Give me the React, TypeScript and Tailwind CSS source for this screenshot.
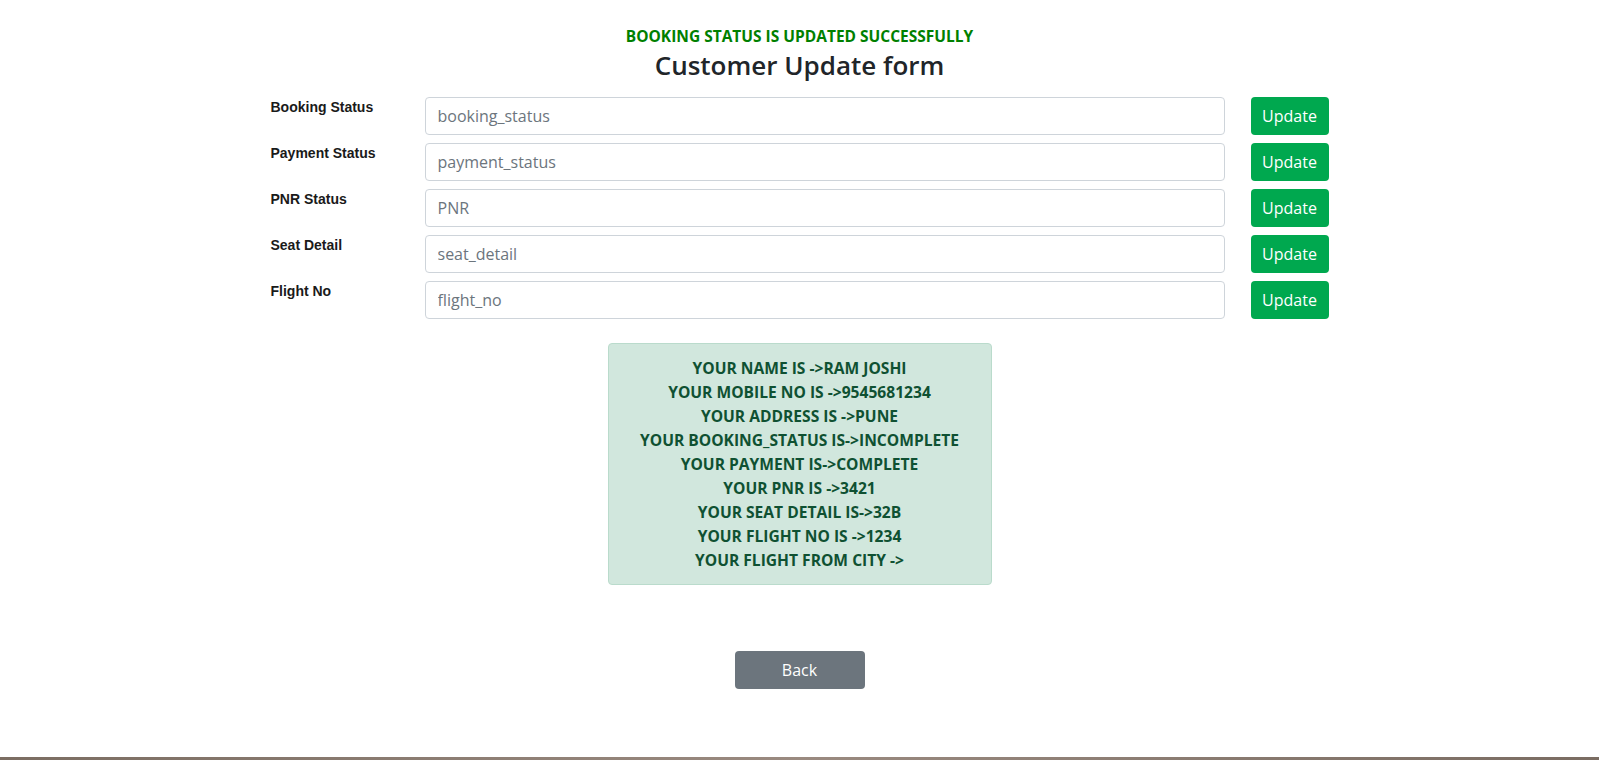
const fields = [
  { label: 'Booking Status', placeholder: 'booking_status' },
  { label: 'Payment Status', placeholder: 'payment_status' },
  { label: 'PNR Status', placeholder: 'PNR' },
  { label: 'Seat Detail', placeholder: 'seat_detail' },
  { label: 'Flight No', placeholder: 'flight_no' },
];

const details = [
  'YOUR NAME IS ->RAM JOSHI',
  'YOUR MOBILE NO IS ->9545681234',
  'YOUR ADDRESS IS ->PUNE',
  'YOUR BOOKING_STATUS IS->INCOMPLETE',
  'YOUR PAYMENT IS->COMPLETE',
  'YOUR PNR IS ->3421',
  'YOUR SEAT DETAIL IS->32B',
  'YOUR FLIGHT NO IS ->1234',
  'YOUR FLIGHT FROM CITY ->',
];

export default function App() {
  return (
    <div className="flex min-h-screen flex-col bg-white font-['Open_Sans',sans-serif] text-[#212529]">
      <div className="flex-1">
        <div className="pt-[26px] text-center">
          <p className="text-[15.5px] font-bold leading-5 text-[#008000]">
            BOOKING STATUS IS UPDATED SUCCESSFULLY
          </p>
          <h2 className="text-[26px] font-semibold leading-[38px]">Customer Update form</h2>
        </div>

        <form className="mx-auto mt-[13px] flex w-[1058px] flex-col gap-2">
          {fields.map((f) => (
            <div key={f.label} className="flex items-start gap-[26px]">
              <label className="w-[128px] font-['Liberation_Sans',Arial,sans-serif] text-[14px] font-bold leading-5 text-[#1a1a1a]">
                {f.label}
              </label>
              <input
                type="text"
                placeholder={f.placeholder}
                className="h-[38px] flex-1 rounded border border-[#ced4da] px-3 text-[16px] text-[#212529] placeholder:text-[#6c757d] outline-none"
              />
              <button
                type="button"
                className="h-[38px] w-[78px] rounded bg-[#00a84f] text-[16px] text-white"
              >
                Update
              </button>
            </div>
          ))}
        </form>

        <div className="mx-auto mt-6 w-[384px] rounded border border-[#badbcc] bg-[#d1e7dd] py-3 text-center text-[15.6px] font-bold leading-6 text-[#0f5132]">
          {details.map((d) => (
            <div key={d}>{d}</div>
          ))}
        </div>

        <div className="mt-[66px] flex justify-center">
          <button
            type="button"
            className="h-[38px] w-[130px] rounded bg-[#6c757d] text-[16px] text-white"
          >
            Back
          </button>
        </div>
      </div>

      <div className="h-[3px] bg-gradient-to-r from-[#7b6d62] via-[#9a8a80] to-[#7a6c62]" />
    </div>
  );
}
